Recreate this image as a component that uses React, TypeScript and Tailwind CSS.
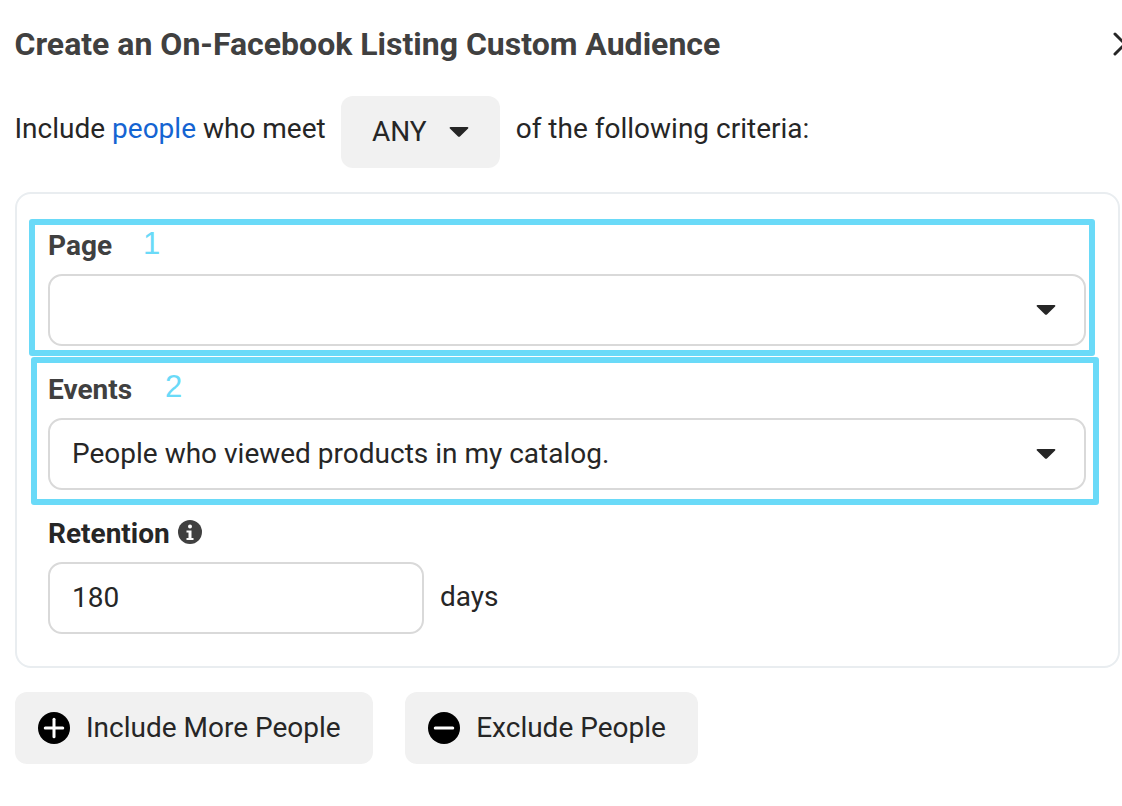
import { Plus, Minus } from 'lucide-react';

const Caret = () => (
  <svg width="20" height="12" viewBox="0 0 20 12" className="shrink-0">
    <path d="M1.5 1h17c.8 0 1.2.9.6 1.5l-7.9 7.8c-.7.7-1.7.7-2.4 0L.9 2.5C.3 1.900.7 1 1.500 1z" fill="#262626" />
  </svg>
);

const SelectBox = ({ value }: { value?: string }) => (
  <div className="flex h-[72px] items-center justify-between rounded-[14px] border-2 border-[#d9d9d9] pl-[22px] pr-[28px] text-[28px] text-[#262626]">
    <span>{value}</span>
    <Caret />
  </div>
);

const GrayButton = ({ label, icon }: { label: string; icon: React.ReactNode }) => (
  <button className="flex h-[72px] items-center gap-[16px] rounded-[12px] bg-[#f1f1f1] pl-[23.5px] pr-[32px] text-[28px] text-[#262626]">
    <span className="flex h-[32px] w-[32px] items-center justify-center rounded-full bg-black">{icon}</span>
    {label}
  </button>
);

export default function App() {
  return (
    <div className="relative h-[806px] w-[1122px] overflow-hidden bg-white font-['Roboto',sans-serif]">
      <div className="flex items-center justify-between pl-[14.5px] pt-[24px]">
        <h1 className="text-[32px] font-bold leading-[40px] text-[#404040]">Create an On-Facebook Listing Custom Audience</h1>
        <svg width="24" height="24" viewBox="0 0 24 24" className="-mr-[15px] shrink-0">
          <path d="M2 2l20 20M22 2L2 22" stroke="#262626" strokeWidth="3" strokeLinecap="round" />
        </svg>
      </div>

      <div className="mt-[32px] flex items-center pl-[14.5px] text-[28px] text-[#262626]">
        <span className="mb-[6px]">
          Include <span className="text-[#1464d2]">people</span> who meet
        </span>
        <div className="ml-[15px] mr-[16px] flex h-[72px] w-[159px] items-center justify-center gap-[22px] rounded-[12px] bg-[#f1f1f1]">
          <span>ANY</span>
          <Caret />
        </div>
        <span className="mb-[6px]">of the following criteria:</span>
      </div>

      <div className="ml-[14.5px] mt-[24px] h-[476px] w-[1105px] rounded-[16px] border-2 border-[#e9edf0] pl-[31.5px] pr-[31.5px] pt-[32px]">
        <div className="text-[28px] font-bold leading-[40px] text-[#404040]">Page</div>
        <div className="mt-[8px]">
          <SelectBox />
        </div>
        <div className="mt-[24px] text-[28px] font-bold leading-[40px] text-[#404040]">Events</div>
        <div className="mt-[8px]">
          <SelectBox value="People who viewed products in my catalog." />
        </div>
        <div className="mt-[24px] flex h-[40px] items-center gap-[8px] text-[28px] font-bold text-[#262626]">
          Retention
          <svg width="24" height="24" viewBox="0 0 24 24" className="-mt-[4px]">
            <circle cx="12" cy="12" r="12" fill="#404040" />
            <circle cx="12" cy="6.500" r="2" fill="white" />
            <path d="M8.500 10.500h5v7.500h2v2h-7v-2h2v-5.500h-2z" fill="white" />
          </svg>
        </div>
        <div className="mt-[8px] flex items-center gap-[16px]">
          <div className="flex h-[72px] w-[376px] items-center rounded-[14px] border-2 border-[#d9d9d9] pl-[22px] text-[28px] text-[#262626]">180</div>
          <span className="mb-[2px] text-[28px] text-[#262626]">days</span>
        </div>
      </div>

      <div className="ml-[14.5px] mt-[24px] flex gap-[32px]">
        <GrayButton label="Include More People" icon={<Plus size={30} color="white" strokeWidth={2.4} />} />
        <GrayButton label="Exclude People" icon={<Minus size={30} color="white" strokeWidth={2.4} />} />
      </div>

      {/* annotation boxes drawn over the form */}
      <div className="absolute left-[29px] top-[219px] h-[137px] w-[1066px] rounded-[3px] border-[6px] border-[#6adaf8]" />
      <div className="absolute left-[31px] top-[357px] h-[148px] w-[1068px] rounded-[3px] border-[6px] border-[#6adaf8]" />
      <span className="absolute left-[143px] top-[224px] font-['Liberation_Sans',sans-serif] text-[31px] leading-[40px] text-[#6adaf8]">1</span>
      <span className="absolute left-[165px] top-[367px] font-['Liberation_Sans',sans-serif] text-[31px] leading-[40px] text-[#6adaf8]">2</span>
    </div>
  );
}
